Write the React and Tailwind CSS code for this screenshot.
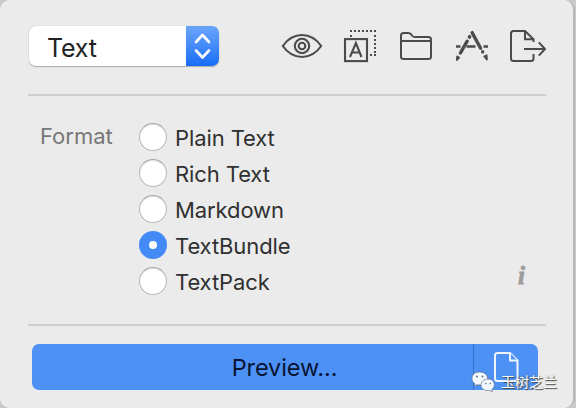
import React from 'react';

const formats = ['Plain Text', 'Rich Text', 'Markdown', 'TextBundle', 'TextPack'];

function Toolbar() {
  return (
    <div className="flex h-[40px] items-center text-[#4b4b4b]">
      <svg width="42" height="40" viewBox="281 26 42 40" fill="none" stroke="currentColor" strokeWidth="2.1">
        <path d="M282.8 46C293 31.4 311 31.4 321.2 46C311 60.6 293 60.6 282.8 46Z" strokeLinejoin="round" />
        <circle cx="302" cy="46" r="7.2" />
        <circle cx="302" cy="46" r="3.3" />
      </svg>
      <svg className="ml-[20px]" width="35" height="40" viewBox="343 26 35 40" fill="none" stroke="currentColor">
        <rect x="345" y="39.1" width="22" height="22" strokeWidth="2.1" />
        <path d="M350 57L355.9 43L361.5 57M352 52.5H359.6" strokeWidth="2.1" />
        <path d="M350 31H376" strokeWidth="2" strokeDasharray="2 2" />
        <path d="M351 35V37M375 35V55M370 55H376" strokeWidth="2" strokeDasharray="2 2" />
      </svg>
      <svg className="ml-[20px]" width="36" height="40" viewBox="398 26 36 40" fill="none" stroke="currentColor" strokeWidth="2" strokeLinejoin="round">
        <path d="M401 57V35.5Q401 33 403.5 33H408Q410 33 411.3 34.5L412.4 36Q413.2 37 415 37H428.5Q431 37 431 39.5V56.5Q431 59 428.5 59H403.5Q401 59 401 57ZM401 41H431" />
      </svg>
      <svg className="ml-[20px]" width="36" height="40" viewBox="454 26 36 40" fill="none" stroke="currentColor" strokeLinecap="round">
        <path d="M469.7 36.6L469.4 37.1M467.2 41.2L460.4 53" strokeWidth="3.4" />
        <path d="M472.1 32.6L480.6 48.3M482.6 51.7L482.7 51.9" strokeWidth="3.3" />
        <path d="M456 46.5H460.5M466.5 46.5H475.5M483.5 46.5H488" strokeWidth="2.6" strokeLinecap="butt" />
        <path d="M457.1 56.3L459.3 57.6L456.7 60.1ZM484.2 56.4L486.7 55.2L487 59.8Z" fill="currentColor" strokeWidth="1.6" strokeLinejoin="round" />
      </svg>
      <svg className="ml-[19px]" width="38" height="40" viewBox="509 26 38 40" fill="none" stroke="currentColor" strokeWidth="2">
        <path d="M533.5 54V58.5Q533.5 61 531 61H513.5Q511 61 511 58.5V33.5Q511 31 513.5 31H525L533.5 39.2V42M525 31V39.2H533.5" />
        <path d="M524 49H545M538.8 42.4L545 49L538.8 55.6" />
      </svg>
    </div>
  );
}

function Radio({ label, checked }) {
  return (
    <label className="flex h-[36px] items-center gap-[8px]">
      <span
        className={
          checked
            ? 'flex size-[28px] items-center justify-center rounded-full bg-[#438af7]'
            : 'size-[28px] rounded-full border border-[#b9b9b9] border-t-[#a5a5a5] bg-white shadow-[inset_0_1px_1px_#e2e2e2]'
        }
      >
        {checked && <span className="size-[8px] rounded-full bg-white" />}
      </span>
      <span className="pt-[2px] text-[22px] leading-[28px] tracking-[-0.1px] whitespace-nowrap">{label}</span>
    </label>
  );
}

export default function App() {
  return (
    <div className="h-[408px] w-[576px] overflow-hidden bg-[#c9c9c9] font-['Inter','Liberation_Sans',sans-serif] text-[#303030]">
      <div className="relative flex h-[408px] w-[575px] flex-col rounded-[10px] border-r-2 border-r-[#b7b7b7] bg-[#ebebeb] pl-[28px]">
        <header className="flex pt-[26px] pl-px">
          <div className="flex h-[40px] w-[190px] shrink-0 overflow-hidden rounded-[7px] bg-white shadow-[0_1px_1px_#aaa,0_0_1px_#aaa]">
            <span className="flex-1 pl-[18px] text-[25px] leading-[44px] tracking-[-0.2px] text-[#222]">Text</span>
            <span className="flex w-[33px] items-center justify-center bg-linear-to-b from-[#6aa5fa] to-[#146df6]">
              <svg width="33" height="40" viewBox="0 0 33 40" fill="none" stroke="white" strokeWidth="2.6" strokeLinecap="round" strokeLinejoin="round">
                <path d="M10 16L16.5 9L23 16M10 24.5L16.5 31.5L23 24.5" />
              </svg>
            </span>
          </div>
          <div className="ml-[62px]">
            <Toolbar />
          </div>
        </header>
        <div className="mt-[28px] h-[2px] w-[518px] bg-[#cecece]" />
        <section className="mt-[23px] flex h-[180px]">
          <span className="w-[111px] pt-[3px] pl-[12px] text-[22px] leading-[28px] text-[#777]">Format</span>
          <div className="flex w-[370px] flex-col">
            {formats.map((f) => (
              <Radio key={f} label={f} checked={f === 'TextBundle'} />
            ))}
          </div>
          <span className="self-end pb-[9px] pl-[9px] font-['Liberation_Serif',serif] text-[25px] leading-[28px] font-bold text-[#9d9d9d] italic [-webkit-text-stroke:0.8px_#9d9d9d]">i</span>
        </section>
        <div className="mt-[25px] h-[2px] w-[518px] bg-[#cecece]" />
        <div className="mt-[18px] ml-[4px] flex h-[46px] w-[506px] rounded-[7px] bg-[#4d91f4]">
          <button className="w-[442px] pt-[2px] pl-[64px] text-[23.5px] leading-[44px] tracking-[-0.1px] text-[#071333]">Preview...</button>
          <button className="flex flex-1 justify-center border-l border-[#3871c9]">
            <svg width="64" height="46" viewBox="474 344 64 46" fill="none" stroke="#edf5ff" strokeWidth="2" strokeLinejoin="round">
              <path d="M510 353H497.5Q495 353 495 355.5V378.5Q495 381 497.5 381H515Q517.5 381 517.5 378.5V360.5Z" />
              <path d="M510 353V360.5H517.5" fill="#4d91f4" />
            </svg>
          </button>
        </div>
        <div className="absolute top-[369px] left-[471px] flex items-center">
          <svg width="26" height="24" viewBox="0 0 26 24">
            <g stroke="#65718a" strokeWidth="0.7">
              <path d="M8.5 2C3.9 2 1 4.8 1 8.5C1 10.7 2 12.4 3.8 13.6L3.2 16L6 14.7C11 16 16.5 13 16.5 8.5C16.5 4.8 13 2 8.5 2Z" fill="#f4f8ff" />
              <path d="M17 9C12.9 9 10 11.7 10 15C10 18.8 14 21.3 18.7 20.4L21.3 21.8L20.8 19.5C26 15.4 22.8 9 17 9Z" fill="#f4f8ff" />
            </g>
            <g fill="#62728b">
              <circle cx="6" cy="6.6" r="1" />
              <circle cx="11.5" cy="6.6" r="1" />
              <circle cx="14.8" cy="13.6" r=".8" />
              <circle cx="19.3" cy="13.6" r=".8" />
            </g>
          </svg>
          <span className="mb-[2px] ml-[4px] font-['Noto_Sans_CJK_SC',sans-serif] text-[14px] leading-[24px] whitespace-nowrap text-white [text-shadow:1px_1px_1px_#444,0_0_1px_#777]">玉树芝兰</span>
        </div>
      </div>
    </div>
  );
}
